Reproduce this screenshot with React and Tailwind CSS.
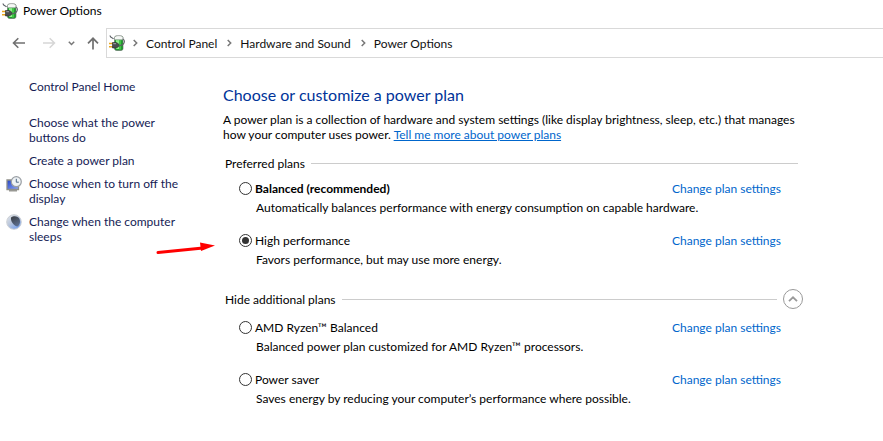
import { useState } from "react";

// Plans listed under "Preferred plans"
const preferredPlans = [
  {
    id: "balanced",
    name: "Balanced (recommended)",
    description:
      "Automatically balances performance with energy consumption on capable hardware.",
    recommended: true,
  },
  {
    id: "high",
    name: "High performance",
    description: "Favors performance, but may use more energy.",
    pointed: true,
  },
];

// Plans that can be collapsed
const additionalPlans = [
  {
    id: "ryzen",
    name: "AMD Ryzen™ Balanced",
    description: "Balanced power plan customized for AMD Ryzen™ processors.",
  },
  {
    id: "saver",
    name: "Power saver",
    description:
      "Saves energy by reducing your computer’s performance where possible.",
  },
];

const crumbs = ["Control Panel", "Hardware and Sound", "Power Options"];

// Green battery with a plug in front
function PowerIcon() {
  return (
    <svg viewBox="0 0 16 16" className="size-4 shrink-0" aria-hidden="true">
      <rect x="5.500" y="1" width="8.500" height="14.500" rx="2" fill="#1f9e2d" stroke="#5b635f" strokeWidth=".6" />
      <path d="M7 5h3v9H7z" fill="#8af086" />
      <path d="M10 5h2v9.500h-2z" fill="#41c845" />
      <path d="M5.500 4.800V2.500C5.500 0 14 0 14 2.500v2.300z" fill="#f6f8f6" stroke="#8a908c" strokeWidth=".6" />
      <path d="M13.500 4c2.500.5 2.200 3.500.8 5-1 1-2 1.500-4.300 2" fill="none" stroke="#5d6165" strokeWidth="1.100" />
      <path d="M1 .5c.3 2.800 2.500 1.700 3.500 3.500" fill="none" stroke="#5c6066" strokeWidth="1.200" />
      <path d="M0 8.500h4M0 11.700h4" stroke="#e9a820" strokeWidth="1.500" />
      <path d="M3.500 7.500h3.800L9.700 9v2.500L7.300 13H3.500z" fill="#4a4d50" stroke="#2a2a2a" strokeWidth=".6" />
      <path d="M4.300 8.700H7" stroke="#a4a7aa" strokeWidth="1" />
    </svg>
  );
}

function DisplayIcon() {
  return (
    <svg viewBox="0 0 16 16" className="size-4" aria-hidden="true">
      <defs>
        <linearGradient id="screen" x1="0" y1="0" x2="1" y2="1">
          <stop offset="0" stopColor="#2443c4" />
          <stop offset="1" stopColor="#8fa8f8" />
        </linearGradient>
      </defs>
      <path d="M1 4h11.500v9.500H1z" fill="url(#screen)" stroke="#8f8f88" strokeWidth="1.300" />
      <path d="M3 14.800h8" stroke="#8b8b85" strokeWidth="1.300" />
      <circle cx="10.300" cy="5.700" r="5" fill="#eef2f5" stroke="#9a9fa4" strokeWidth="1.200" />
      <path d="M10.300 2.800v3.400h2.500" fill="none" stroke="#4b6683" strokeWidth="1" />
    </svg>
  );
}

function SleepIcon() {
  return (
    <svg viewBox="0 0 16 16" className="size-4" aria-hidden="true">
      <defs>
        <linearGradient id="moon" x1="0" y1="0" x2=".8" y2="1">
          <stop offset="0" stopColor="#e6e9ec" />
          <stop offset=".5" stopColor="#b9c6dc" />
          <stop offset="1" stopColor="#6d9cf0" />
        </linearGradient>
        <linearGradient id="night" x1=".3" y1="0" x2=".8" y2="1">
          <stop offset="0" stopColor="#3d4249" />
          <stop offset="1" stopColor="#5f7396" />
        </linearGradient>
      </defs>
      <circle cx="8" cy="8" r="7.300" fill="url(#moon)" stroke="#cdd1d6" strokeWidth="1" />
      <path d="M5 3.500C7.500 1.400 12 1.800 13.500 5c1.200 3.200 0 6-2 7.500C8 12 4.300 7.500 5 3.500z" fill="url(#night)" />
    </svg>
  );
}

function Chevron() {
  return (
    <svg viewBox="0 0 5 8" className="h-2 w-[5px] shrink-0" fill="none" stroke="#777" strokeWidth="1.500" aria-hidden="true">
      <path d="M.7 1 3.700 4 .7 7" />
    </svg>
  );
}

function NavBar() {
  return (
    <nav className="flex h-[30px] items-stretch">
      <div className="flex w-[106px] shrink-0 items-center pl-3">
        <button aria-label="Back" className="w-[14px]">
          <svg viewBox="0 0 14 12" className="block w-full" fill="none" stroke="#707070" strokeWidth="1.600">
            <path d="M13 6H1.500M6.300 1.200 1.500 6l4.800 4.800" />
          </svg>
        </button>
        <button aria-label="Forward" className="ml-4 w-[14px]">
          <svg viewBox="0 0 14 12" className="block w-full" fill="none" stroke="#d6d6d6" strokeWidth="1.500">
            <path d="M1 6h11.500M7.700 1.200 12.500 6l-4.800 4.800" />
          </svg>
        </button>
        <button aria-label="Recent locations" className="ml-3 w-[7px]">
          <svg viewBox="0 0 7 5" className="block w-full" fill="none" stroke="#777" strokeWidth="1.500">
            <path d="m.8.8 2.700 2.700L6.200.8" />
          </svg>
        </button>
        <button aria-label="Up" className="ml-3 w-3">
          <svg viewBox="0 0 12 13" className="block w-full" fill="none" stroke="#707070" strokeWidth="1.700">
            <path d="M6 12.500V1.500M1 6.300l5-5 5 5" />
          </svg>
        </button>
      </div>
      <div className="flex flex-1 items-center gap-2 border border-r-0 border-[#d9d9d9] pl-0.5">
        <PowerIcon />
        {crumbs.map((crumb) => (
          <span key={crumb} className="flex items-center gap-2">
            <Chevron />
            <a href="#" className="pr-0.5 text-[#111]">
              {crumb}
            </a>
          </span>
        ))}
      </div>
    </nav>
  );
}

function TaskLink({ icon, children }) {
  return (
    <li className="flex">
      <span className="w-[23px] shrink-0">{icon}</span>
      <a href="#">{children}</a>
    </li>
  );
}

function Plan({ plan, checked, onSelect }) {
  return (
    <div className="relative pr-[22px] pl-4">
      <div className="flex justify-between">
        <label className="flex items-center gap-[3px]">
          <input
            type="radio"
            name="plan"
            checked={checked}
            onChange={() => onSelect(plan.id)}
            className="size-[13px] appearance-none rounded-full border border-[#333] bg-white bg-clip-content p-0.5 checked:bg-[#333]"
          />
          <span className={plan.recommended ? "font-bold" : ""}>{plan.name}</span>
        </label>
        <a href="#" className="text-[#0066cc]">
          Change plan settings
        </a>
      </div>
      <p className="mt-1 pl-[17px]">{plan.description}</p>
      {plan.pointed && (
        <svg viewBox="0 0 60 16" className="absolute top-2 -left-[67px] h-4 w-[60px]" aria-hidden="true">
          <path d="M2 11.500 47 7" stroke="#f00" strokeWidth="3" strokeLinecap="round" />
          <path d="M44 1.500 59 4.500 45 10z" fill="#f00" />
        </svg>
      )}
    </div>
  );
}

export default function App() {
  const [selected, setSelected] = useState("high");
  const [expanded, setExpanded] = useState(true);

  return (
    <div className="min-h-screen bg-white font-[Lato,sans-serif] text-[12px] leading-[15px] text-black">
      <header className="flex h-7 items-start gap-[5px] pt-[3px] pl-0.5">
        <PowerIcon />
        <span>Power Options</span>
      </header>

      <NavBar />

      <div className="flex">
        {/* Sidebar */}
        <aside className="w-[217px] shrink-0 pt-[21px] pl-1.5 text-[#151c55]">
          <a href="#" className="ml-[23px]">
            Control Panel Home
          </a>
          <ul className="mt-[21px] flex flex-col gap-2">
            <TaskLink>
              Choose what the power
              <br />
              buttons do
            </TaskLink>
            <TaskLink>Create a power plan</TaskLink>
            <TaskLink icon={<DisplayIcon />}>
              Choose when to turn off the
              <br />
              display
            </TaskLink>
            <TaskLink icon={<SleepIcon />}>
              Change when the computer
              <br />
              sleeps
            </TaskLink>
          </ul>
        </aside>

        {/* Power plans */}
        <main className="mr-20 ml-1.5 flex-1 pt-[27px]">
          <h1 className="text-[16px] leading-5 text-[#003399]">
            Choose or customize a power plan
          </h1>
          <p className="mt-[7px]">
            A power plan is a collection of hardware and system settings (like display brightness, sleep, etc.) that manages
            <br />
            how your computer uses power.{" "}
            <a href="#" className="text-[#0066cc] underline">
              Tell me more about power plans
            </a>
          </p>

          <section className="mt-[14px]">
            <div className="flex items-center gap-1.5 pr-[5px] pl-0.5">
              <h2>Preferred plans</h2>
              <span className="h-px flex-1 bg-[#ccc]" />
            </div>
            <div className="mt-2.5 flex flex-col gap-[18px]">
              {preferredPlans.map((plan) => (
                <Plan key={plan.id} plan={plan} checked={selected === plan.id} onSelect={setSelected} />
              ))}
            </div>
          </section>

          <section className="mt-[22px]">
            <div className="flex items-center gap-1.5 pl-0.5">
              <h2>{expanded ? "Hide additional plans" : "Show additional plans"}</h2>
              <span className="h-px flex-1 bg-[#ccc]" />
              <button
                aria-label="Toggle additional plans"
                onClick={() => setExpanded(!expanded)}
                className="flex size-5 items-center justify-center rounded-full border border-[#999]"
              >
                <svg viewBox="0 0 10 6" className="h-1.5 w-2.5" fill="none" stroke="#999" strokeWidth="1.800">
                  <path d="M1 5.200 5 1.300l4 3.900" />
                </svg>
              </button>
            </div>
            {expanded && (
              <div className="mt-[11px] flex flex-col gap-[18px]">
                {additionalPlans.map((plan) => (
                  <Plan key={plan.id} plan={plan} checked={selected === plan.id} onSelect={setSelected} />
                ))}
              </div>
            )}
          </section>
        </main>
      </div>
    </div>
  );
}
